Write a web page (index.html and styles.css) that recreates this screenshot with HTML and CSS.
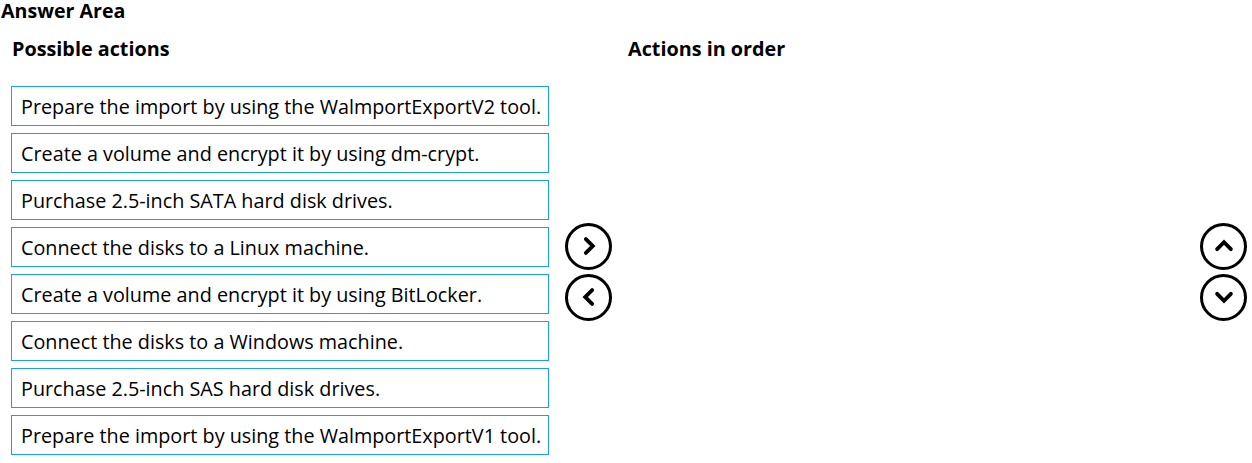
FILE: index.html
```html
<!DOCTYPE html>
<html>
<head>
<meta charset="utf-8">
<link rel="stylesheet" href="styles.css">
</head>
<body>
<h1 class="title">Answer Area</h1>
<div class="columns">
  <h2 class="heading heading-left">Possible actions</h2>
  <div></div>
  <h2 class="heading heading-right">Actions in order</h2>
  <ul class="list">
    <li class="item">Prepare the import by using the WalmportExportV2 tool.</li>
    <li class="item">Create a volume and encrypt it by using dm-crypt.</li>
    <li class="item">Purchase 2.5-inch SATA hard disk drives.</li>
    <li class="item">Connect the disks to a Linux machine.</li>
    <li class="item">Create a volume and encrypt it by using BitLocker.</li>
    <li class="item">Connect the disks to a Windows machine.</li>
    <li class="item">Purchase 2.5-inch SAS hard disk drives.</li>
    <li class="item">Prepare the import by using the WalmportExportV1 tool.</li>
  </ul>
  <div class="controls">
    <button class="circle" aria-label="Move right"><svg viewBox="0 0 24 24"><path d="M9.5 6.5 L15 12 L9.5 17.5"/></svg></button>
    <button class="circle" aria-label="Move left"><svg viewBox="0 0 24 24"><path d="M14.5 6.5 L9 12 L14.5 17.5"/></svg></button>
  </div>
  <div class="order">
    <div class="controls controls-right">
      <button class="circle" aria-label="Move up"><svg viewBox="0 0 24 24"><path d="M6.5 14.5 L12 9 L17.5 14.5"/></svg></button>
      <button class="circle" aria-label="Move down"><svg viewBox="0 0 24 24"><path d="M6.5 9.5 L12 15 L17.5 9.5"/></svg></button>
    </div>
  </div>
</div>
</body>
</html>
```
FILE: styles.css
```css
html, body {
  margin: 0;
  padding: 0;
  background: #ffffff;
}
body {
  font-family: "Open Sans", "Noto Sans", sans-serif;
  color: #000000;
}
.title {
  margin: 0;
  padding-left: 1px;
  font-size: 19.6px;
  font-weight: 700;
  line-height: 22px;
}
.columns {
  display: grid;
  grid-template-columns: 549px 79px 1fr;
  grid-template-rows: auto auto;
  padding-top: 14px;
}
.heading {
  margin: 0;
  font-size: 19.8px;
  font-weight: 700;
  line-height: 26px;
  height: 50px;
}
.heading-left {
  padding-left: 12px;
}
.list {
  list-style: none;
  margin: 0;
  padding: 0 0 0 11px;
  display: flex;
  flex-direction: column;
  gap: 7px;
}
.item {
  box-sizing: border-box;
  height: 40px;
  width: 538px;
  border: 1px solid #1ba1e2;
  padding: 0 0 0 9px;
  display: flex;
  align-items: center;
  font-size: 19.8px;
  white-space: nowrap;
}
.controls {
  display: flex;
  flex-direction: column;
  align-items: center;
  justify-content: center;
  gap: 4px;
  padding-top: 2px;
}
.order {
  display: flex;
  justify-content: flex-end;
  padding-right: 5px;
}
.circle {
  box-sizing: border-box;
  width: 47px;
  height: 47px;
  border: 3px solid #000;
  border-radius: 50%;
  background: #fff;
  padding: 0;
  display: flex;
  align-items: center;
  justify-content: center;
}
.circle svg {
  width: 30px;
  height: 30px;
  fill: none;
  stroke: #000;
  stroke-width: 3.1;
  stroke-linecap: round;
  stroke-linejoin: miter;
}
```
